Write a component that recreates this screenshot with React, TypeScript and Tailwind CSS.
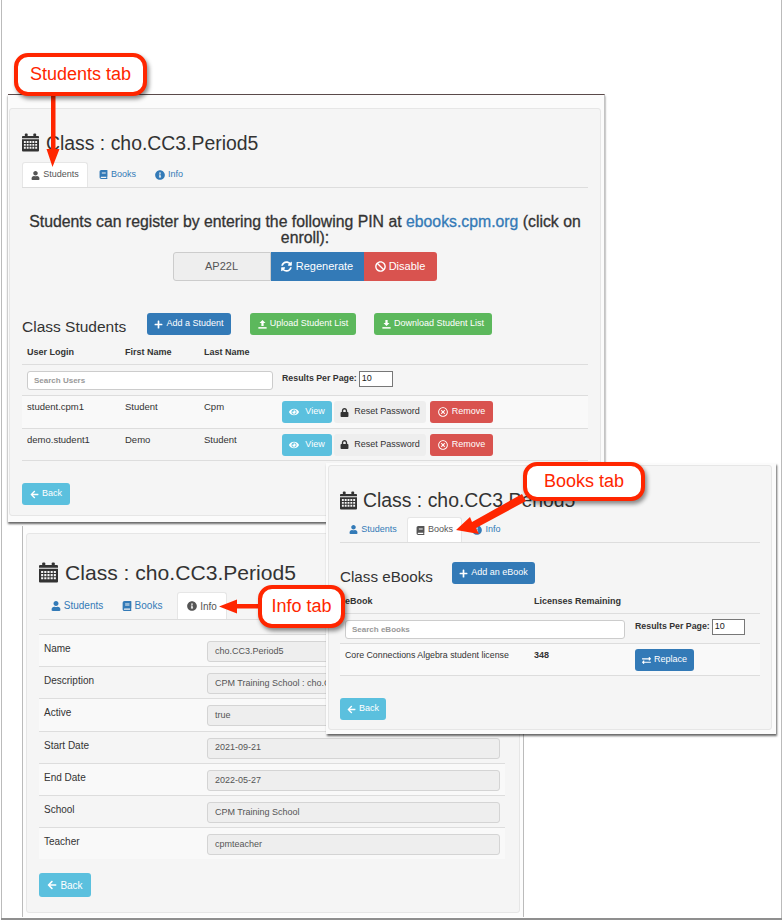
import type { ReactNode } from 'react'
import { FaUser, FaBook, FaInfoCircle, FaSyncAlt, FaBan, FaPlus, FaEye, FaLock, FaRegTimesCircle, FaArrowLeft, FaExchangeAlt } from 'react-icons/fa'

function CalendarIcon({ className }: { className: string }) {
  return (
    <svg viewBox="0 0 18 19" className={className} fill="#333">
      <rect x="3" y="0" width="3" height="3" rx="1" />
      <rect x="12" y="0" width="3" height="3" rx="1" />
      <path d="M0 3.5a1 1 0 0 1 1-1h16a1 1 0 0 1 1 1V5H0z" />
      <path fillRule="evenodd" d="M0 6h18v12a1 1 0 0 1-1 1H1a1 1 0 0 1-1-1zM2 8v2h2V8zm3 0v2h2V8zm3 0v2h2V8zm3 0v2h2V8zm3 0v2h2V8zM2 11v2h2v-2zm3 0v2h2v-2zm3 0v2h2v-2zm3 0v2h2v-2zm3 0v2h2v-2zM2 14v2h2v-2zm3 0v2h2v-2zm3 0v2h2v-2zm3 0v2h2v-2zm3 0v2h2v-2z" />
    </svg>
  )
}

function TransferIcon({ up, className }: { up: boolean; className: string }) {
  return (
    <svg viewBox="0 0 12 12" className={className} fill="currentColor">
      {up ? <path d="M6 0l4 4H7.500v4h-3V4H2z" /> : <path d="M4.500 0h3v4H10L6 8 2 4h2.500z" />}
      <rect x="0.500" y="9.500" width="11" height="2" />
    </svg>
  )
}

function Btn({ color, className, children }: { color: string; className: string; children: ReactNode }) {
  return (
    <div className={`flex items-center justify-center gap-[3px] rounded-[3px] text-[9px] text-white ${color} ${className}`}>
      {children}
    </div>
  )
}

function Callout({ className, children }: { className: string; children: ReactNode }) {
  return (
    <div className={`absolute z-30 flex items-center justify-center rounded-[14px] border-[4px] border-[#ff2600] bg-white text-[18px] text-[#ff2600] shadow-[2px_3px_4px_rgba(0,0,0,0.45)] ${className}`}>
      {children}
    </div>
  )
}

function Tab({ active, icon, label, className }: { active: boolean; icon: ReactNode; label: string; className: string }) {
  return (
    <div className={`flex h-full items-center justify-center gap-[3px] rounded-t-[3px] ${active ? 'border border-b-0 border-[#e6e6e6] bg-white text-[#555]' : 'text-[#337ab7]'} ${className}`}>
      {icon}
      <span>{label}</span>
    </div>
  )
}

function StudentRow({ login, first, last, shaded }: { login: string; first: string; last: string; shaded: boolean }) {
  return (
    <div className={`flex h-[32.500px] border-b border-[#ddd] text-[9.500px] text-[#333] ${shaded ? 'bg-[#f9f9f9]' : ''}`}>
      <div className="w-[103px] pl-[5px] pt-[4px]">{login}</div>
      <div className="w-[79px] pt-[4px]">{first}</div>
      <div className="w-[78px] pt-[4px]">{last}</div>
      <div className="flex items-start pt-[5px]">
        <Btn color="bg-[#5bc0de]" className="h-[22px] w-[50px]"><FaEye className="mr-[3px] text-[10px]" />View</Btn>
        <div className="ml-[2px] flex h-[22px] w-[92px] items-center justify-center gap-[5px] rounded-[3px] bg-[#eeeeee] text-[9px] text-[#333]"><FaLock className="text-[9px]" />Reset Password</div>
        <Btn color="bg-[#d9534f]" className="ml-[4px] h-[22px] w-[63px]"><FaRegTimesCircle className="mr-[1px] text-[10px]" />Remove</Btn>
      </div>
    </div>
  )
}

function InfoRow({ label, value, shaded }: { label: string; value: string; shaded: boolean }) {
  return (
    <div className={`flex h-[32.200px] border-t border-[#ddd] text-[#333] ${shaded ? 'bg-[#f9f9f9]' : ''}`}>
      <div className="w-[168px] pl-[5px] pt-[6px] text-[10px]">{label}</div>
      <div className="mt-[6px] flex h-[21px] w-[293px] items-center rounded-[3px] border border-[#d4d4d4] bg-[#eeeeee] pl-[7px] text-[9px] text-[#555]">{value}</div>
    </div>
  )
}

export default function App() {
  return (
    <div className="relative h-[922px] w-[783px] overflow-hidden bg-white font-['Liberation_Sans',sans-serif] text-[#333]">
      {/* page frame */}
      <div className="absolute bottom-[3px] left-[1px] top-0 w-px bg-[#bbb]" />
      <div className="absolute bottom-[3px] right-[1px] top-0 w-px bg-[#bbb]" />
      <div className="absolute bottom-[2px] left-[1px] right-[1px] h-[2px] bg-[#8f8f8f]" />

      {/* students window */}
      <div className="absolute left-[8px] top-[94px] z-0 h-[428px] w-[597px] border-t-[1px] border-r border-t-[#5a4a4a] border-r-[#c4c4c4] bg-[#fbfbfb] pl-[1px] pt-[13px] shadow-[0_2px_2px_rgba(0,0,0,0.6)]">
        <div className="h-[408px] w-[592px] rounded-[3px] border border-[#e6e6e6] bg-[#f5f5f5] px-[12px]">
          <div className="mt-[24px] flex h-[18px] items-center">
            <CalendarIcon className="h-[19px] w-[17px] shrink-0" />
            <h1 className="ml-[7px] mt-[4px] text-[19.400px] leading-none">Class : cho.CC3.Period5</h1>
          </div>
          <div className="mt-[11px] flex h-[26px] border-b border-[#ddd] text-[9px]">
            <Tab active icon={<FaUser className="text-[9px]" />} label="Students" className="w-[66px]" />
            <Tab active={false} icon={<FaBook className="text-[9px]" />} label="Books" className="w-[49px] ml-[5px]" />
            <Tab active={false} icon={<FaInfoCircle className="text-[10px]" />} label="Info" className="w-[42px] ml-[6px]" />
          </div>
          <p className="mt-[26px] text-center text-[15.800px] leading-[16px] [-webkit-text-stroke:0.3px]">
            Students can register by entering the following PIN at <span className="text-[#337ab7]">ebooks.cpm.org</span> (click on enroll):
          </p>
          <div className="mt-[6px] flex justify-center pr-[1px] text-[11px]">
            <div className="flex h-[29px] w-[98px] items-center justify-center rounded-l-[3px] border border-[#ccc] bg-[#eeeeee] text-[#555]">AP22L</div>
            <div className="flex h-[29px] w-[93px] items-center justify-center gap-[4px] bg-[#337ab7] text-white"><FaSyncAlt className="text-[11px]" />Regenerate</div>
            <div className="flex h-[29px] w-[73px] items-center justify-center gap-[3px] rounded-r-[3px] bg-[#d9534f] text-white"><FaBan className="text-[11px]" />Disable</div>
          </div>
          <div className="mt-[32px] flex h-[22px] items-start">
            <h2 className="mt-[6px] w-[125px] text-[15.500px] leading-[16px]">Class Students</h2>
            <Btn color="bg-[#337ab7]" className="h-[22px] w-[84px]"><FaPlus className="text-[9px]" />Add a Student</Btn>
            <Btn color="bg-[#5cb85c]" className="ml-[19px] h-[22px] w-[106px]"><TransferIcon up className="h-[9px] w-[9px]" />Upload Student List</Btn>
            <Btn color="bg-[#5cb85c]" className="ml-[18px] h-[22px] w-[118px]"><TransferIcon up={false} className="h-[9px] w-[9px]" />Download Student List</Btn>
          </div>
          <div className="mt-[7px] flex h-[23px] items-center border-b border-[#ddd] text-[9px] font-bold">
            <div className="w-[103px] pl-[5px]">User Login</div>
            <div className="w-[79px]">First Name</div>
            <div>Last Name</div>
          </div>
          <div className="flex h-[31px] border-b border-[#ddd]">
            <div className="ml-[5px] mt-[6px] flex h-[19px] w-[246px] items-center rounded-[3px] border border-[#ccc] bg-white pl-[6px] text-[8px] font-bold text-[#999]">Search Users</div>
            <div className="ml-[9px] mt-[6px] flex h-[16px] items-center text-[8.800px] font-bold">
              Results Per Page:
              <div className="ml-[2px] flex h-[16px] w-[34px] items-center border border-[#777] bg-white pl-[2px] text-[9px] font-normal text-[#222]">10</div>
            </div>
          </div>
          <StudentRow login="student.cpm1" first="Student" last="Cpm" shaded />
          <StudentRow login="demo.student1" first="Demo" last="Student" shaded={false} />
          <Btn color="bg-[#5bc0de]" className="mt-[22px] h-[22px] w-[48px]"><FaArrowLeft className="text-[9px]" />Back</Btn>
        </div>
      </div>

      {/* info window */}
      <div className="absolute left-[22px] top-[526px] z-10 h-[391px] w-[502px] border-x border-[#bbb] bg-[#fcfcfc] pl-[3px] pt-[7px]">
        <div className="h-[380px] w-[494px] rounded-[3px] border border-[#e6e6e6] bg-[#f5f5f5] px-[12px]">
          <div className="mt-[28px] flex h-[21px] items-center">
            <CalendarIcon className="h-[21px] w-[19px] shrink-0" />
            <h1 className="ml-[7px] text-[21.100px] leading-none">Class : cho.CC3.Period5</h1>
          </div>
          <div className="mt-[9px] flex h-[28px] w-[466px] border-b border-[#ddd] text-[10px]">
            <Tab active={false} icon={<FaUser className="text-[10px]" />} label="Students" className="w-[64px] ml-[6px]" />
            <Tab active={false} icon={<FaBook className="text-[10px]" />} label="Books" className="w-[50px] ml-[8px]" />
            <Tab active icon={<FaInfoCircle className="text-[10px] text-[#555]" />} label="Info" className="w-[50px] ml-[10px]" />
          </div>
          <div className="mt-[14px] w-[466px]">
            <InfoRow label="Name" value="cho.CC3.Period5" shaded />
            <InfoRow label="Description" value="CPM Training School : cho.CC3.Period5" shaded={false} />
            <InfoRow label="Active" value="true" shaded />
            <InfoRow label="Start Date" value="2021-09-21" shaded={false} />
            <InfoRow label="End Date" value="2022-05-27" shaded />
            <InfoRow label="School" value="CPM Training School" shaded={false} />
            <InfoRow label="Teacher" value="cpmteacher" shaded />
          </div>
          <Btn color="bg-[#5bc0de]" className="mt-[14px] h-[24px] w-[52px] !text-[10px]"><FaArrowLeft className="text-[10px]" />Back</Btn>
        </div>
      </div>

      {/* books window */}
      <div className="absolute left-[326px] top-[463px] z-20 h-[271px] w-[450px] bg-[#fbfbfb] pl-[2px] pt-[2px] shadow-[1px_2px_2px_rgba(0,0,0,0.6)]">
        <div className="h-[265px] w-[444px] rounded-[3px] border border-[#e6e6e6] bg-[#f5f5f5] px-[11px]">
          <div className="mt-[25px] flex h-[18px] items-center">
            <CalendarIcon className="h-[19px] w-[17px] shrink-0" />
            <h1 className="ml-[6px] mt-[2px] text-[19.400px] leading-none">Class : cho.CC3.Period5</h1>
          </div>
          <div className="mt-[8px] flex h-[26px] w-[420px] border-b border-[#ddd] text-[9px]">
            <Tab active={false} icon={<FaUser className="text-[9px]" />} label="Students" className="w-[56px] ml-[5px]" />
            <Tab active icon={<FaBook className="text-[9px] text-[#555]" />} label="Books" className="w-[55px] ml-[6px]" />
            <Tab active={false} icon={<FaInfoCircle className="text-[10px]" />} label="Info" className="w-[37px] ml-[6px]" />
          </div>
          <div className="mt-[19px] flex h-[22px] items-start">
            <h2 className="mt-[7px] w-[112px] text-[15.200px] leading-[16px]">Class eBooks</h2>
            <Btn color="bg-[#337ab7]" className="h-[22px] w-[83px]"><FaPlus className="text-[9px]" />Add an eBook</Btn>
          </div>
          <div className="mt-[7px] flex h-[23px] w-[420px] items-center border-b border-[#ddd] text-[9px] font-bold">
            <div className="w-[194px] pl-[5px]">eBook</div>
            <div>Licenses Remaining</div>
          </div>
          <div className="flex h-[30px] w-[420px] border-b border-[#ddd]">
            <div className="ml-[5px] mt-[6px] flex h-[19px] w-[280px] items-center rounded-[3px] border border-[#ccc] bg-white pl-[6px] text-[8px] font-bold text-[#999]">Search eBooks</div>
            <div className="ml-[10px] mt-[5px] flex h-[16px] items-center text-[8.800px] font-bold">
              Results Per Page:
              <div className="ml-[2px] flex h-[16px] w-[33px] items-center border border-[#777] bg-white pl-[2px] text-[9px] font-normal text-[#222]">10</div>
            </div>
          </div>
          <div className="flex h-[32px] w-[420px] border-b border-[#ddd] bg-[#f9f9f9] text-[8.800px]">
            <div className="w-[194px] pl-[5px] pt-[5px]">Core Connections Algebra student license</div>
            <div className="w-[101px] pt-[5px] text-[9px] font-bold">348</div>
            <Btn color="bg-[#337ab7]" className="mt-[5px] h-[22px] w-[59px]"><FaExchangeAlt className="text-[9px]" />Replace</Btn>
          </div>
          <Btn color="bg-[#5bc0de]" className="mt-[22px] h-[22px] w-[46px]"><FaArrowLeft className="text-[9px]" />Back</Btn>
        </div>
      </div>

      {/* callouts and arrows */}
      <svg className="absolute inset-0 z-30 h-[922px] w-[783px]" viewBox="0 0 783 922" fill="#ff2600">
        <path d="M51 94h4.500v55h4L52.500 167 46.500 149H51z" />
        <path d="M456 530L470 517L472 522L522 494L526 501L476 528L479 534Z" />
        <path d="M262 604v4.500h-25v5l-18-7 18-7v4.500z" />
      </svg>
      <Callout className="left-[14px] top-[53px] h-[43px] w-[133px]">Students tab</Callout>
      <Callout className="left-[523px] top-[462px] h-[39px] w-[122px]">Books tab</Callout>
      <Callout className="left-[258px] top-[585px] h-[43px] w-[87px]">Info tab</Callout>
    </div>
  )
}
